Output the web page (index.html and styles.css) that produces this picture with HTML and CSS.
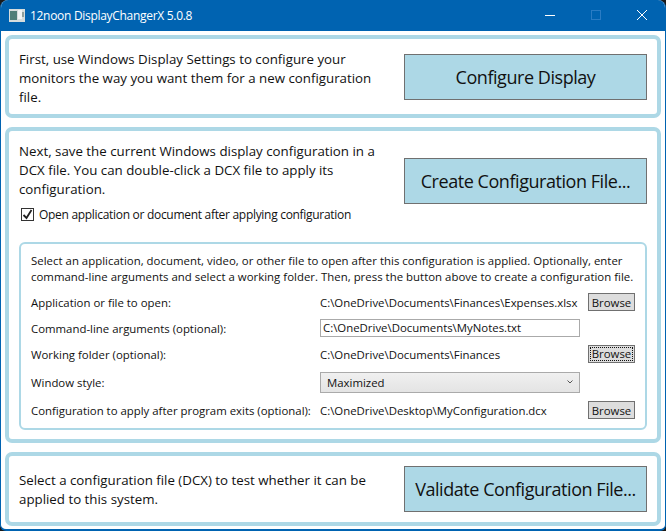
FILE: index.html
```html
<!DOCTYPE html>
<html lang="en">
<head>
<meta charset="utf-8">
<title>12noon DisplayChangerX 5.0.8</title>
<link rel="stylesheet" href="styles.css">
</head>
<body>
<div class="window">
  <header class="titlebar">
    <svg class="app-icon" width="16" height="13" viewBox="0 0 16 13"><rect width="16" height="13" fill="#d5dcdc"/><rect x="1" y="2" width="7" height="9" fill="#4f7f78"/><rect x="9" y="1" width="4" height="9" fill="#f0f4f4"/><rect x="13" y="3" width="2" height="5" fill="#8f9f9c"/></svg>
    <span class="title">12noon DisplayChangerX 5.0.8</span>
    <div class="controls">
      <svg width="46" height="31" viewBox="0 0 46 31"><path d="M18 15.500h10" stroke="#fff" stroke-width="1"/></svg>
      <svg width="46" height="31" viewBox="0 0 46 31"><rect x="18.500" y="10.500" width="9" height="9" fill="none" stroke="#2a7cc4" stroke-width="1"/></svg>
      <svg width="46" height="31" viewBox="0 0 46 31"><path d="M18 10l10 10M28 10l-10 10" stroke="#fff" stroke-width="1"/></svg>
    </div>
  </header>
  <main class="content">
    <section class="panel panel-one">
      <div class="top-row">
        <p class="lead">First, use Windows Display Settings to configure your monitors the way you want them for a new configuration file.</p>
        <button class="big-btn">Configure Display</button>
      </div>
    </section>
    <section class="panel panel-two">
      <div class="top-row top-row-two">
        <div class="lead-col">
          <p class="lead">Next, save the current Windows display configuration in a DCX file. You can double-click a DCX file to apply its configuration.</p>
          <label class="check-row">
            <span class="checkbox"><svg width="11" height="11" viewBox="0 0 11 11"><path d="M1.500 6l3 3 5-8" fill="none" stroke="#222" stroke-width="1.800"/></svg></span>
            Open application or document after applying configuration
          </label>
        </div>
        <button class="big-btn">Create Configuration File...</button>
      </div>
      <div class="inner">
        <p class="inner-intro">Select an application, document, video, or other file to open after this configuration is applied. Optionally, enter command-line arguments and select a working folder. Then, press the button above to create a configuration file.</p>
        <div class="form-grid">
          <span>Application or file to open:</span>
          <span>C:\OneDrive\Documents\Finances\Expenses.xlsx</span>
          <button class="browse">Browse</button>

          <span>Command-line arguments (optional):</span>
          <span class="textbox">C:\OneDrive\Documents\MyNotes.txt</span>
          <span></span>

          <span>Working folder (optional):</span>
          <span>C:\OneDrive\Documents\Finances</span>
          <button class="browse focused"><span>Browse</span></button>

          <span>Window style:</span>
          <span class="select">Maximized<svg width="6" height="4" viewBox="0 0 6 4"><path d="M.5 .5L3 3l2.500-2.500" fill="none" stroke="#555" stroke-width="1"/></svg></span>
          <span></span>

          <span>Configuration to apply after program exits (optional):</span>
          <span>C:\OneDrive\Desktop\MyConfiguration.dcx</span>
          <button class="browse">Browse</button>
        </div>
      </div>
    </section>
    <section class="panel panel-three">
      <div class="top-row">
        <p class="lead">Select a configuration file (DCX) to test whether it can be applied to this system.</p>
        <button class="big-btn">Validate Configuration File...</button>
      </div>
    </section>
  </main>
</div>
</body>
</html>
```
FILE: styles.css
```css
* { box-sizing: border-box; }
html, body { margin: 0; padding: 0; background: #1a1a1a; }
body {
  width: 666px;
  height: 531px;
  overflow: hidden;
  font-family: "Open Sans", "Noto Sans", sans-serif;
  color: #111;
}
p { margin: 0; }
.window {
  width: 666px;
  height: 531px;
  background: #fff;
  border: 1px solid #0063b1;
  border-width: 0 1px 2px 1px;
  border-radius: 8px 8px 6px 6px;
  overflow: hidden;
  display: flex;
  flex-direction: column;
}
.titlebar {
  height: 31px;
  flex: none;
  background: #0063b1;
  color: #fff;
  display: flex;
  align-items: center;
  padding-left: 8px;
  font-size: 12px;
  letter-spacing: -0.3px;
}
.app-icon { margin-right: 5px; }
.title { flex: 1; }
.controls { display: flex; }
.controls svg { display: block; }
.content {
  flex: 1;
  display: flex;
  flex-direction: column;
  gap: 9px;
  padding: 4px 4px 0;
}
.panel {
  border: 4px solid #add8e6;
  border-radius: 7px;
  padding: 0 10px;
  background: #fff;
}
.panel-one { height: 83px; }
.panel-two { height: 316px; }
.panel-three { height: 74px; }
.top-row {
  display: flex;
  justify-content: space-between;
  align-items: center;
  height: 100%;
}
.top-row-two { height: auto; align-items: flex-start; padding-top: 11px; }
.lead {
  width: 368px;
  font-size: 13.3px;
  line-height: 19px;
}
.panel-one .lead { margin-top: 4px; }
.panel-three .lead { margin-top: 2px; }
.lead-col { width: 368px; }
.big-btn {
  width: 243px;
  height: 46px;
  background: #add8e6;
  border: 1px solid #707070;
  font: inherit;
  font-size: 18px;
  letter-spacing: -0.45px;
  color: #111;
  padding: 0;
  flex: none;
}
.top-row-two .big-btn { margin-top: 16px; }
.check-row {
  display: flex;
  align-items: center;
  gap: 5px;
  height: 17px;
  margin-top: 7px;
  padding-left: 2px;
  font-size: 12px;
  letter-spacing: -0.3px;
}
.checkbox {
  width: 13px;
  height: 13px;
  border: 1px solid #333;
  background: #fff;
  display: flex;
  align-items: center;
  justify-content: center;
}
.inner {
  margin-top: 19px;
  height: 188px;
  border: 2px solid #add8e6;
  border-radius: 6px;
  padding: 9px 10px 0;
  font-size: 11.4px;
}
.inner-intro { line-height: 16px; width: 610px; letter-spacing: 0.02px; }
.form-grid {
  display: grid;
  grid-template-columns: 281px 260px 47px;
  grid-template-rows: 26px 26px 26px 30px 26px;
  column-gap: 8px;
  align-items: center;
  margin-top: 4px;
}
.browse {
  width: 47px;
  height: 18px;
  background: #dddddd;
  border: 1px solid #707070;
  font: inherit;
  color: #111;
  padding: 0;
}
.browse.focused { padding: 1px; }
.browse.focused span {
  display: block;
  height: 100%;
  line-height: 14px;
  outline: 1px dotted #111;
  outline-offset: -1px;
}
.textbox {
  height: 18px;
  line-height: 16px;
  border: 1px solid #aaa;
  padding: 0 2px;
  background: #fff;
}
.select {
  height: 21px;
  border: 1px solid #aaa;
  background: linear-gradient(#f0f0f0, #e4e4e4);
  padding: 0 6px;
  display: flex;
  align-items: center;
  justify-content: space-between;
}
```
